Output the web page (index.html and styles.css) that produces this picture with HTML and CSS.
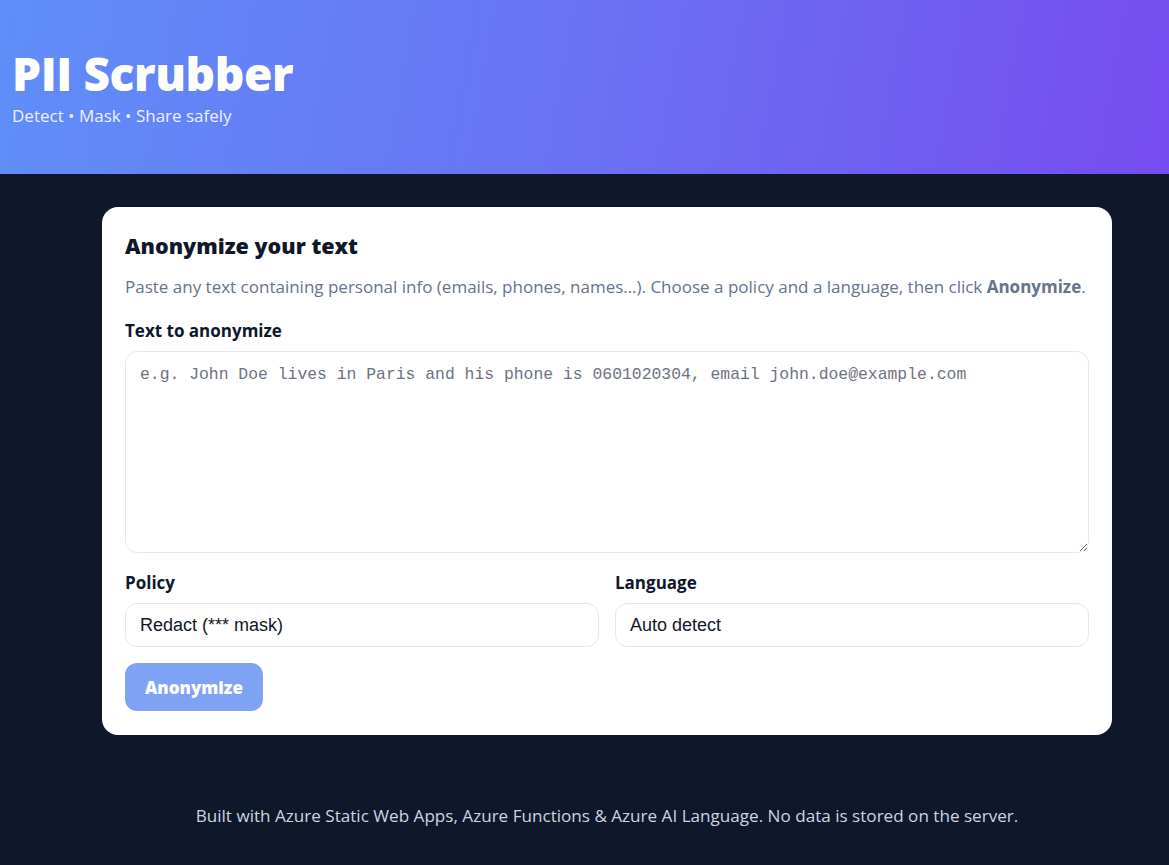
FILE: index.html
```html
<!DOCTYPE html>
<html lang="en">
<head>
<meta charset="utf-8">
<title>PII Scrubber</title>
<link rel="stylesheet" href="styles.css">
</head>
<body>
<header class="hero">
  <h1 class="hero-title">PII Scrubber</h1>
  <p class="hero-sub">Detect • Mask • Share safely</p>
</header>
<main class="main">
  <section class="card">
    <h2 class="card-title">Anonymize your text</h2>
    <p class="card-desc">Paste any text containing personal info (emails, phones, names…). Choose a policy and a language, then click <strong>Anonymize</strong>.</p>
    <label class="field-label" for="txt">Text to anonymize</label>
    <textarea id="txt" class="textarea" placeholder="e.g. John Doe lives in Paris and his phone is 0601020304, email john.doe@example.com"></textarea>
    <div class="row">
      <div class="col">
        <label class="field-label" for="policy">Policy</label>
        <div class="select">Redact (*** mask)</div>
      </div>
      <div class="col">
        <label class="field-label" for="lang">Language</label>
        <div class="select">Auto detect</div>
      </div>
    </div>
    <button class="btn" disabled>Anonymize</button>
  </section>
</main>
<footer class="footer">Built with Azure Static Web Apps, Azure Functions &amp; Azure AI Language. No data is stored on the server.</footer>
</body>
</html>
```
FILE: styles.css
```css
* { box-sizing: border-box; }
html, body { margin: 0; padding: 0; }
body {
  background: #0f172a;
  font-family: "Open Sans", "Noto Sans", sans-serif;
  min-height: 865px;
}
.hero {
  height: 174px;
  background: linear-gradient(100deg, #5f8ef8 0%, #6a72f3 50%, #764cf0 100%);
  padding: 44px 12px 0;
  color: #fff;
}
.hero-title {
  margin: 0;
  font-size: 46px;
  font-weight: 800;
  line-height: 58px;
  letter-spacing: -0.4px;
}
.hero-sub {
  margin: 2px 0 0;
  font-size: 17px;
  line-height: 24px;
  color: #eef1fe;
}
.main {
  display: flex;
  justify-content: center;
  padding: 33px 0 0 45px;
}
.card {
  width: 1010px;
  background: #fff;
  border-radius: 16px;
  padding: 23px 23px 24px;
}
.card-title {
  margin: 0;
  font-size: 21.5px;
  font-weight: 800;
  line-height: 32px;
  color: #0f172a;
}
.card-desc {
  margin: 13px 0 0;
  font-size: 17px;
  line-height: 24px;
  color: #64748b;
  white-space: nowrap;
}
.card-desc strong { font-weight: 700; }
.field-label {
  display: block;
  font-size: 17px;
  font-weight: 700;
  line-height: 24px;
  color: #0f172a;
  margin: 20px 0 8px;
}
.textarea {
  display: block;
  width: 100%;
  height: 202px;
  border: 1px solid #e2e8f0;
  border-radius: 12px;
  padding: 12px 14px;
  font-family: "Liberation Mono", "DejaVu Sans Mono", monospace;
  font-size: 16.4px;
  line-height: 22px;
  color: #0f172a;
  resize: vertical;
}
.textarea::placeholder { color: #6b7280; }
.row {
  display: grid;
  grid-template-columns: 1fr 1fr;
  gap: 16px;
}
.row .field-label { margin-top: 18px; }
.select {
  height: 44px;
  border: 1px solid #e2e8f0;
  border-radius: 12px;
  padding: 0 14px;
  display: flex;
  align-items: center;
  font-family: "Liberation Sans", Arial, sans-serif;
  font-size: 18px;
  color: #0f172a;
}
.btn {
  display: block;
  margin-top: 16px;
  width: 138px;
  height: 48px;
  border: none;
  border-radius: 12px;
  background: #7fa3f4;
  color: #fff;
  font-family: "Open Sans", sans-serif;
  font-size: 17px;
  font-weight: 800;
}
.footer {
  text-align: center;
  color: #cbd5e1;
  font-size: 17.1px;
  line-height: 24px;
  padding: 69px 0 0 45px;
}
```
